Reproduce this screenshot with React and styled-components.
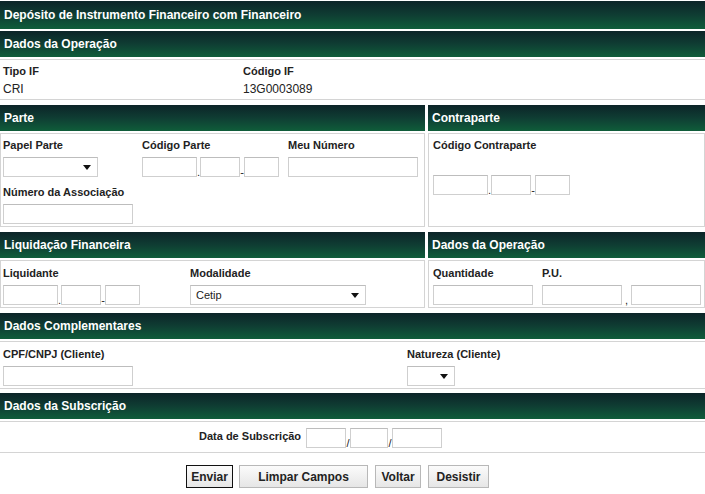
import React from "react";
import styled, { createGlobalStyle } from "styled-components";

const Global = createGlobalStyle`
  body {
    margin: 0;
    background: #fff;
    font-family: "Liberation Sans", Arial, sans-serif;
    color: #222;
  }
`;

const Page = styled.div`
  width: 705px;
  padding-top: 1px;
`;

const Bar = styled.div`
  height: ${(p) => (p.$title ? 28 : 26)}px;
  margin-top: ${(p) => p.$mt ?? 0}px;
  background: linear-gradient(to bottom, #0c2428 0%, #0f3d33 50%, #0f5d3a 100%);
  color: #fff;
  font-weight: bold;
  font-size: 12px;
  display: flex;
  align-items: center;
  padding-left: 4px;
  box-sizing: border-box;
`;

const Body = styled.div`
  margin-top: 2px;
  border-top: 1px solid #d4d4d4;
  border-bottom: 1px solid #d4d4d4;
  border-left: ${(p) => (p.$boxed ? "1px solid #d4d4d4" : "none")};
  border-right: ${(p) => (p.$boxed ? "1px solid #d4d4d4" : "none")};
  height: ${(p) => p.$h}px;
  box-sizing: border-box;
  padding: ${(p) => p.$pad || "5px 0 0 3px"};
`;

const Columns = styled.div`
  display: flex;
  gap: 3px;
  margin-top: ${(p) => p.$mt || 0}px;
`;

const Col = styled.div`
  width: ${(p) => p.$w}px;
  flex: none;
`;

const Row = styled.div`
  display: flex;
  align-items: flex-start;
  margin-top: ${(p) => p.$mt || 0}px;
`;

const Field = styled.div`
  width: ${(p) => p.$w}px;
  flex: none;
`;

const Label = styled.div`
  font-size: 11px;
  font-weight: bold;
  color: #222;
  height: 13px;
  line-height: 13px;
  margin-bottom: ${(p) => p.$mb ?? 5}px;
  white-space: nowrap;
`;

const Value = styled.div`
  font-size: 12px;
  line-height: 14px;
  margin-top: 4px;
`;

const Input = styled.div`
  width: ${(p) => p.$w}px;
  height: 20px;
  box-sizing: border-box;
  border: 1px solid #cfcfcf;
  border-top-color: #bdbdbd;
  background: #fff;
  flex: none;
`;

const Sep = styled.span`
  width: ${(p) => p.$w || 3}px;
  flex: none;
  font-size: 11px;
  line-height: 11px;
  padding-top: 10px;
  text-align: center;
  color: #222;
`;

const Select = styled.div`
  width: ${(p) => p.$w}px;
  height: 20px;
  box-sizing: border-box;
  border: 1px solid #cfcfcf;
  border-top-color: #bdbdbd;
  background: #fff;
  display: flex;
  align-items: center;
  justify-content: space-between;
  padding: 0 6px 0 5px;
  font-size: 11px;
  flex: none;
`;

const Arrow = styled.span`
  width: 0;
  height: 0;
  border-left: 4px solid transparent;
  border-right: 4px solid transparent;
  border-top: 5px solid #111;
`;

const CodeGroup = ({ w = [55, 40, 35], seps = [".", "-"], sepW = [3, 4] }) => (
  <Row>
    <Input $w={w[0]} />
    <Sep $w={sepW[0]}>{seps[0]}</Sep>
    <Input $w={w[1]} />
    <Sep $w={sepW[1]}>{seps[1]}</Sep>
    <Input $w={w[2]} />
  </Row>
);

const DateRow = styled.div`
  display: flex;
  align-items: center;
  padding-left: 199px;
`;

const DateLabel = styled.span`
  font-size: 11px;
  font-weight: bold;
  margin-right: 5px;
  margin-top: -6px;
`;

const Buttons = styled.div`
  display: flex;
  gap: 6px;
  margin-top: 12px;
  padding-left: 186px;
`;

const Button = styled.button`
  height: 23px;
  width: ${(p) => p.$w}px;
  margin-left: ${(p) => p.$ml || 0}px;
  font-family: "Liberation Sans", Arial, sans-serif;
  font-size: 12px;
  font-weight: bold;
  color: #222;
  background: linear-gradient(to bottom, #fbfbfb, #e6e6e6);
  border: 1px solid ${(p) => (p.$focus ? "#111" : "#b8b8b8")};
  border-radius: 0;
  padding: 0;
`;

export default function App() {
  return (
    <Page>
      <Global />
      <Bar $title>Depósito de Instrumento Financeiro com Financeiro</Bar>
      <Bar $mt={2}>Dados da Operação</Bar>
      <Body $h={41} $pad="5px 0 0 3px">
        <Row>
          <Field $w={240}>
            <Label $mb={0}>Tipo IF</Label>
            <Value>CRI</Value>
          </Field>
          <Field $w={200}>
            <Label $mb={0}>Código IF</Label>
            <Value>13G0003089</Value>
          </Field>
        </Row>
      </Body>

      <Columns $mt={5}>
        <Col $w={425}>
          <Bar>Parte</Bar>
          <Body $boxed $h={94} $pad="5px 0 0 2px">
            <Row>
              <Field $w={139}>
                <Label>Papel Parte</Label>
                <Select $w={95}>
                  <span />
                  <Arrow />
                </Select>
              </Field>
              <Field $w={146}>
                <Label>Código Parte</Label>
                <CodeGroup />
              </Field>
              <Field $w={130}>
                <Label>Meu Número</Label>
                <Input $w={130} />
              </Field>
            </Row>
            <Row $mt={8}>
              <Field $w={140}>
                <Label>Número da Associação</Label>
                <Input $w={130} />
              </Field>
            </Row>
          </Body>
        </Col>
        <Col $w={277}>
          <Bar>Contraparte</Bar>
          <Body $boxed $h={94} $pad="5px 0 0 4px">
            <Label $mb={23}>Código Contraparte</Label>
            <CodeGroup />
          </Body>
        </Col>
      </Columns>

      <Columns $mt={5}>
        <Col $w={425}>
          <Bar>Liquidação Financeira</Bar>
          <Body $boxed $h={48} $pad="6px 0 0 2px">
            <Row>
              <Field $w={187}>
                <Label>Liquidante</Label>
                <CodeGroup />
              </Field>
              <Field $w={176}>
                <Label>Modalidade</Label>
                <Select $w={176}>
                  <span>Cetip</span>
                  <Arrow />
                </Select>
              </Field>
            </Row>
          </Body>
        </Col>
        <Col $w={277}>
          <Bar>Dados da Operação</Bar>
          <Body $boxed $h={48} $pad="6px 0 0 4px">
            <Row>
              <Field $w={109}>
                <Label>Quantidade</Label>
                <Input $w={100} />
              </Field>
              <Field $w={160}>
                <Label>P.U.</Label>
                <Row>
                  <Input $w={80} />
                  <Sep $w={9}>,</Sep>
                  <Input $w={70} />
                </Row>
              </Field>
            </Row>
          </Body>
        </Col>
      </Columns>

      <Bar $mt={5}>Dados Complementares</Bar>
      <Body $h={48} $pad="6px 0 0 3px">
        <Row>
          <Field $w={404}>
            <Label>CPF/CNPJ (Cliente)</Label>
            <Input $w={130} />
          </Field>
          <Field $w={120}>
            <Label>Natureza (Cliente)</Label>
            <Select $w={48}>
              <span />
              <Arrow />
            </Select>
          </Field>
        </Row>
      </Body>

      <Bar $mt={4}>Dados da Subscrição</Bar>
      <Body $h={32} $pad="6px 0 0 0">
        <DateRow>
          <DateLabel>Data de Subscrição</DateLabel>
          <Row>
            <Input $w={40} />
            <Sep $w={4}>/</Sep>
            <Input $w={38} />
            <Sep $w={4}>/</Sep>
            <Input $w={50} />
          </Row>
        </DateRow>
      </Body>

      <Buttons>
        <Button $w={47} $focus>Enviar</Button>
        <Button $w={129}>Limpar Campos</Button>
        <Button $w={46} $ml={1}>Voltar</Button>
        <Button $w={61} $ml={1}>Desistir</Button>
      </Buttons>
    </Page>
  );
}
